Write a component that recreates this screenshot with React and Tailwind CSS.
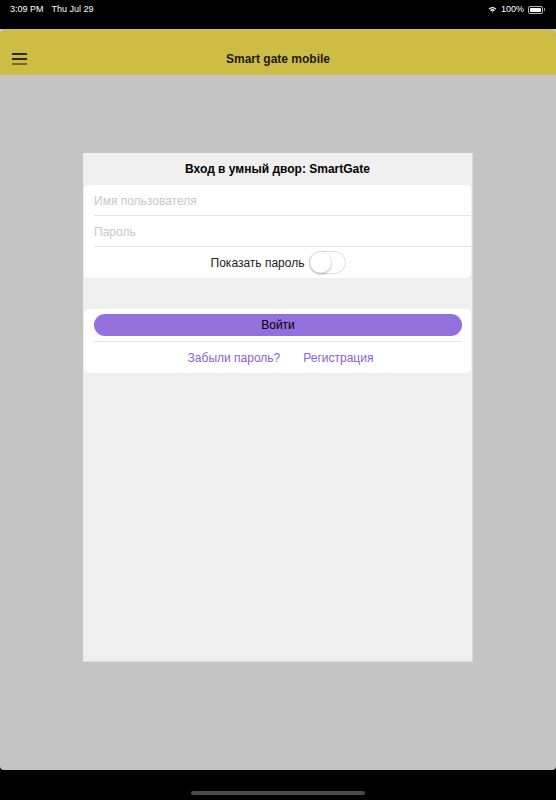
import React, { useState } from 'react';

const font = { fontFamily: '"Liberation Sans", Arial, sans-serif' };

const StatusBar = () => (
  <div className="h-[29px] bg-black text-white flex items-start justify-between pl-[10px] pr-[11px] pt-[3px] text-[9px]">
    <div className="flex gap-[8px]">
      <span>3:09 PM</span>
      <span>Thu Jul 29</span>
    </div>
    <div className="flex items-center gap-[3px]">
      <svg width="9" height="7" viewBox="0 0 10 8" className="mr-[1px]">
        <path d="M0.5 3 A6.5 6.5 0 0 1 9.5 3 L8.4 4.1 A5 5 0 0 0 1.6 4.1 Z" fill="white" />
        <path d="M2.3 4.8 A4 4 0 0 1 7.7 4.8 L6.6 5.9 A2.5 2.5 0 0 0 3.4 5.9 Z" fill="white" />
        <path d="M4 6.7 A1.5 1.5 0 0 1 6 6.7 L5 7.8 Z" fill="white" />
      </svg>
      <span>100%</span>
      <div className="flex items-center ml-[1px]">
        <div className="w-[15px] h-[8px] rounded-[2px] border border-white/70 p-[1px]">
          <div className="w-full h-full bg-white rounded-[1px]" />
        </div>
        <div className="w-[1px] h-[3px] bg-white/60 ml-[1px]" />
      </div>
    </div>
  </div>
);

const Header = () => (
  <div className="h-[46px] bg-[#cebd44] rounded-t-[6px] relative flex items-center justify-center">
    <div className="absolute left-[12px] top-[24px] flex flex-col gap-[3.5px]">
      <div className="w-[15px] h-[1.5px] bg-[#2a2a1a]" />
      <div className="w-[15px] h-[1.5px] bg-[#2a2a1a]" />
      <div className="w-[15px] h-[1.5px] bg-[#7a6f2a]" />
    </div>
    <span className="text-[12px] font-bold text-[#1a1a1a] mt-[14px]">Smart gate mobile</span>
  </div>
);

const Toggle = ({ on, onChange }) => (
  <button
    onClick={() => onChange(!on)}
    className={`w-[37px] h-[23px] rounded-full border border-[#dcdcdc] relative ${on ? 'bg-[#9370db]' : 'bg-white'}`}
  >
    <span
      className={`absolute top-[0px] w-[21px] h-[21px] rounded-full bg-white shadow-[0_1px_3px_rgba(0,0,0,0.3)] ${on ? 'left-[14px]' : 'left-[0px]'}`}
    />
  </button>
);

export default function App() {
  const [showPassword, setShowPassword] = useState(false);

  return (
    <div className="w-[556px] h-[800px] bg-black flex flex-col" style={font}>
      <StatusBar />
      <div className="flex-1 flex flex-col rounded-b-[4px] bg-[#c4c4c4] overflow-hidden">
        <Header />
        <div className="flex-1 flex justify-center pt-[78px]">
          <div className="w-[390px] h-[509px] bg-[#efefef] border-r border-b border-[#dadada] flex flex-col">
            <div className="h-[32px] flex items-center justify-center text-[12px] font-bold text-black">
              Вход в умный двор: SmartGate
            </div>

            <div className="bg-white rounded-[5px] mx-[1px] pl-[10px] text-[12px]">
              <div className="h-[31px] flex items-center pt-[1px] border-b border-[#e3e3e3] text-[#c7c7c7]">
                Имя пользователя
              </div>
              <div className="h-[31px] flex items-center pt-[1px] border-b border-[#e3e3e3] text-[#c7c7c7]">
                Пароль
              </div>
              <div className="h-[31px] flex items-center justify-center gap-[5px] pl-[2px] pr-[10px] text-[#222]">
                <span>Показать пароль</span>
                <Toggle on={showPassword} onChange={setShowPassword} />
              </div>
            </div>

            <div className="h-[31px]" />

            <div className="bg-white rounded-[5px] mx-[1px] pl-[10px] pr-[9px] text-[12px]">
              <div className="pt-[5px] pb-[5px] border-b border-[#e3e3e3]">
                <button className="w-full h-[22px] rounded-full bg-[#9370db] text-black text-[12px] flex items-center justify-center">
                  Войти
                </button>
              </div>
              <div className="h-[31px] flex items-center justify-center gap-[23px] pl-[5px] text-[#8d5ed9]">
                <span>Забыли пароль?</span>
                <span>Регистрация</span>
              </div>
            </div>
          </div>
        </div>
      </div>
      <div className="h-[30px] flex items-end justify-center pb-[5px]">
        <div className="w-[174px] h-[4px] rounded-full bg-[#4a4a4a]" />
      </div>
    </div>
  );
}
